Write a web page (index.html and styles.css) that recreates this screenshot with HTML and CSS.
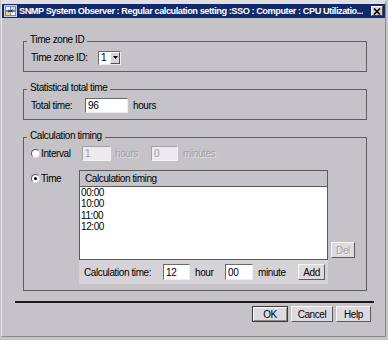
FILE: index.html
```html
<!DOCTYPE html>
<html lang="en">
<head>
    <meta charset="UTF-8">
    <title>Regular calculation setting</title>
    <link rel="stylesheet" href="styles.css">
</head>
<body>
    <div class="window">
        <div class="titlebar">
            <svg class="app-icon" width="13" height="12" viewBox="0 0 13 12">
                <rect x="0.5" y="0.5" width="12" height="11" fill="#6f86d8" stroke="#c8d0f0"/>
                <rect x="2" y="2" width="4" height="3" fill="#ffffff"/>
                <rect x="7" y="2" width="4" height="3" fill="#f2dc48"/>
                <rect x="2" y="7" width="4" height="3" fill="#f2dc48"/>
                <rect x="7" y="7" width="4" height="3" fill="#ffffff"/>
                <path d="M4 5 L9 7 M9 5 L4 7" stroke="#1c3a9c" stroke-width="1"/>
            </svg>
            <span class="title">SNMP System Observer : Regular calculation setting :SSO : Computer : CPU Utilizatio...</span>
            <span class="close">
                <svg width="8" height="7" viewBox="0 0 8 7"><path d="M1 0.5 L7 6.5 M7 0.5 L1 6.5" stroke="#000" stroke-width="1.6"/></svg>
            </span>
        </div>

        <div class="content">
            <fieldset class="group">
                <legend>Time zone ID</legend>
                <div class="row">
                    <span class="lbl lbl-tz">Time zone ID:</span>
                    <div class="combo">
                        <span class="combo-val">1</span>
                        <span class="combo-btn">
                            <svg width="5" height="3" viewBox="0 0 5 3"><path d="M0 0 H5 L2.5 3 Z" fill="#000"/></svg>
                        </span>
                    </div>
                </div>
            </fieldset>

            <fieldset class="group gap-top">
                <legend>Statistical total time</legend>
                <div class="row">
                    <span class="lbl lbl-total">Total time:</span>
                    <input class="field w-total" type="text" value="96" readonly>
                    <span class="unit">hours</span>
                </div>
            </fieldset>

            <fieldset class="group gap-top timing">
                <legend>Calculation timing</legend>
                <div class="row">
                    <span class="opt opt-interval"><span class="radio"></span>Interval</span>
                    <input class="field disabled w-int-h" type="text" value="1" disabled>
                    <span class="unit disabled-text unit-hours">hours</span>
                    <input class="field disabled w-int-m" type="text" value="0" disabled>
                    <span class="unit disabled-text">minutes</span>
                </div>
                <div class="time-row">
                    <span class="opt opt-time"><span class="radio checked"></span>Time</span>
                    <div class="timing-table">
                        <div class="list">
                            <div class="list-head">Calculation timing</div>
                            <ul class="list-body">
                                <li>00:00</li>
                                <li>10:00</li>
                                <li>11:00</li>
                                <li>12:00</li>
                            </ul>
                        </div>
                        <div class="strip">
                            <span class="lbl lbl-calc">Calculation time:</span>
                            <input class="field w-hour" type="text" value="12" readonly>
                            <span class="unit unit-hour">hour</span>
                            <input class="field w-min" type="text" value="00" readonly>
                            <span class="unit unit-minute">minute</span>
                            <button class="btn btn-add">Add</button>
                        </div>
                    </div>
                    <button class="btn btn-del" disabled>Del</button>
                </div>
            </fieldset>

            <div class="separator"></div>

            <div class="actions">
                <button class="btn btn-default btn-ok">OK</button>
                <button class="btn btn-cancel">Cancel</button>
                <button class="btn btn-help">Help</button>
            </div>
        </div>
    </div>
</body>
</html>
```

FILE: styles.css
```css
body {
    margin: 0;
    background-color: #c5c3c7;
    font-family: "Liberation Sans", Arial, sans-serif;
    font-size: 10px;
    letter-spacing: -0.4px;
    color: #000;
}
.window {
    width: 385px;
    height: 337px;
    margin-left: 1px;
    box-sizing: border-box;
    background-color: #c5c3c7;
    border-top: 4px solid #e0dfe2;
    border-left: 1px solid #e6e6e6;
    border-right: 1px solid #8a8a8a;
    border-bottom: 1px solid #8a8a8a;
}
.titlebar {
    height: 14px;
    display: flex;
    align-items: center;
    padding-left: 2px;
    background-color: #12296b;
    color: #fff;
    font-size: 9.2px;
    font-weight: bold;
    letter-spacing: -0.45px;
    white-space: nowrap;
    overflow: hidden;
}
.app-icon {
    flex: none;
}
.title {
    margin-left: 2px;
    overflow: hidden;
}
.close {
    flex: none;
    margin-left: auto;
    margin-right: 2px;
    width: 12px;
    height: 10px;
    box-sizing: border-box;
    display: flex;
    align-items: center;
    justify-content: center;
    background-color: #d6d4d8;
    border: 1px solid;
    border-color: #fff #404040 #404040 #fff;
}
.content {
    padding: 16px 18px 0 21px;
}
.group {
    margin: 0;
    padding: 1px 8px 6px 7px;
    min-width: 0;
    border: 1px solid #5e5e5e;
}
.group legend {
    padding: 0 3px 4px;
    margin-left: -4px;
    line-height: 11px;
}
.gap-top {
    margin-top: 10px;
}
.row {
    display: flex;
    align-items: center;
    height: 15px;
}
.lbl {
    flex: none;
}
.lbl-tz {
    width: 67px;
}
.lbl-total {
    width: 54px;
}
.lbl-calc {
    width: 79px;
}
.combo {
    flex: none;
    width: 23px;
    height: 14px;
    box-sizing: border-box;
    display: flex;
    background-color: #fff;
    border: 1px solid;
    border-color: #6a6a6a #efefef #efefef #6a6a6a;
}
.combo-val {
    flex: 1;
    padding-left: 2px;
    line-height: 12px;
}
.combo-btn {
    width: 10px;
    box-sizing: border-box;
    display: flex;
    align-items: center;
    justify-content: center;
    background-color: #d6d4d8;
    border: 1px solid;
    border-color: #fff #505050 #505050 #fff;
}
.field {
    flex: none;
    box-sizing: border-box;
    height: 15px;
    margin: 0;
    padding: 0 2px;
    font: inherit;
    letter-spacing: inherit;
    color: #000;
    background-color: #fff;
    border: 1px solid;
    border-color: #6a6a6a #eeeeee #eeeeee #6a6a6a;
    outline: none;
}
.field.disabled {
    background-color: #eceaee;
    color: #9a989c;
    border-color: #a4a2a6 #f2f2f2 #f2f2f2 #a4a2a6;
}
.w-total {
    width: 43px;
}
.w-int-h {
    width: 29px;
}
.w-int-m {
    width: 27px;
}
.w-hour {
    width: 27px;
    height: 16px;
}
.w-min {
    width: 28px;
    height: 16px;
}
.unit {
    flex: none;
    padding-left: 5px;
}
.unit-hours {
    width: 36px;
    padding-left: 4px;
}
.unit-hour {
    width: 30px;
}
.unit-minute {
    width: 40px;
}
.disabled-text {
    color: #a3a1a5;
    text-shadow: 1px 1px 0 #e4e2e6;
}
.opt {
    flex: none;
    display: flex;
    align-items: center;
}
.opt-interval {
    width: 51px;
}
.opt-time {
    width: 48px;
    height: 16px;
}
.radio {
    width: 9px;
    height: 9px;
    box-sizing: border-box;
    margin-right: 1px;
    border-radius: 50%;
    background-color: #fff;
    border: 1px solid;
    border-color: #5a5a5a #d8d8d8 #d8d8d8 #5a5a5a;
    display: flex;
    align-items: center;
    justify-content: center;
}
.radio.checked::after {
    content: "";
    width: 3px;
    height: 3px;
    border-radius: 50%;
    background-color: #000;
}
.time-row {
    display: flex;
    align-items: flex-start;
    margin-top: 9px;
}
.timing-table {
    flex: none;
    width: 249px;
}
.list {
    border: 1px solid #5a5a5a;
}
.list-head {
    height: 15px;
    line-height: 15px;
    padding-left: 5px;
    border-bottom: 1px solid #5a5a5a;
    background-color: #c5c3c7;
}
.list-body {
    height: 72px;
    margin: 0;
    padding: 0 1px;
    list-style: none;
    background-color: #fff;
    line-height: 11.4px;
}
.strip {
    height: 24px;
    display: flex;
    align-items: center;
    padding-left: 5px;
    background-color: #d5d3d7;
}
.btn {
    flex: none;
    box-sizing: border-box;
    height: 16px;
    margin: 0;
    padding: 0;
    font: inherit;
    letter-spacing: inherit;
    color: #000;
    background-color: #dddbdf;
    border: 1px solid;
    border-color: #f6f6f6 #5a5a5a #5a5a5a #f6f6f6;
}
.btn:disabled {
    color: #a3a1a5;
    text-shadow: 1px 1px 0 #f2f2f2;
}
.btn-add {
    width: 27px;
}
.btn-del {
    width: 24px;
    margin-left: 3px;
    margin-top: 72px;
}
.separator {
    height: 2px;
    margin: 10px -7px 0 -8px;
    background-color: #1a1a1a;
}
.actions {
    display: flex;
    justify-content: flex-end;
    gap: 3px;
    margin-top: 3px;
    margin-right: -4px;
}
.btn-default {
    border-color: #3a3a3a;
    box-shadow: inset 1px 1px 0 #fff, inset -1px -1px 0 #8a8a8a;
}
.btn-ok {
    width: 36px;
}
.btn-cancel {
    width: 42px;
}
.btn-help {
    width: 35px;
}
```
